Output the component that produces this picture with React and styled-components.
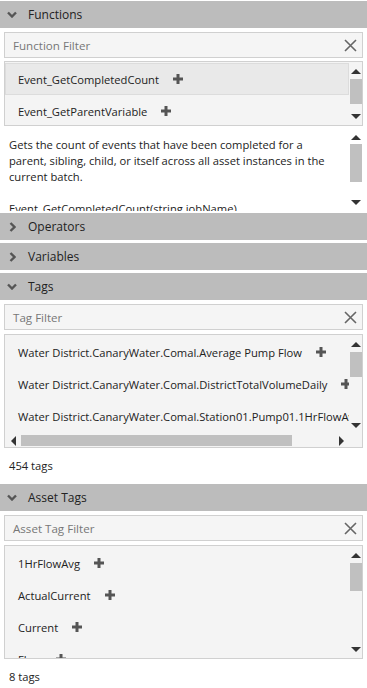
import React from "react";
import styled, { createGlobalStyle } from "styled-components";

const GlobalStyle = createGlobalStyle`
  html, body {
    margin: 0;
    padding: 0;
    background: #ffffff;
  }
  body {
    font-family: "Segoe UI", "Open Sans", "Noto Sans", sans-serif;
    font-size: 11.2px;
    color: #222;
  }
`;

const Panel = styled.div`
  width: 367px;
  height: 688px;
  overflow: hidden;
  display: flex;
  flex-direction: column;
`;

const Header = styled.div`
  height: 27px;
  flex: 0 0 auto;
  margin-top: ${props => props.gap || 0}px;
  background: #bcbcbc;
  display: flex;
  align-items: center;
  font-size: 12px;
  color: #222;
`;

const Chevron = styled.span`
  width: 28px;
  display: flex;
  align-items: center;
  justify-content: center;
  padding-right: 4px;
  box-sizing: border-box;
  color: #555;
`;

const Filter = styled.div`
  margin: ${props => props.top || 4}px 4px 0;
  height: 26px;
  box-sizing: border-box;
  border: 1px solid #d0d0d0;
  background: #f5f5f5;
  display: flex;
  align-items: center;
  padding: 0 5px 0 8px;
  flex: 0 0 auto;
  font-size: 11.6px;
`;

const Placeholder = styled.span`
  flex: 1;
  color: #777;
`;

const List = styled.div`
  margin: ${props => props.top || 4}px 4px 0;
  height: ${props => props.h}px;
  box-sizing: border-box;
  border: 1px solid #d0d0d0;
  background: #f4f4f4;
  display: grid;
  grid-template-columns: 1fr 13px;
  grid-template-rows: ${props => (props.hscroll ? "1fr 13px" : "1fr")};
  overflow: hidden;
  flex: 0 0 auto;
`;

const Rows = styled.div`
  overflow: hidden;
  padding-top: 1px;
  min-width: 0;
`;

const Row = styled.div`
  height: 32px;
  box-sizing: border-box;
  display: flex;
  align-items: center;
  padding-left: 12px;
  white-space: nowrap;
  background: ${props => (props.active ? "#e9e9e9" : "transparent")};
  border: 1px solid ${props => (props.active ? "#dcdcdc" : "transparent")};
`;

const Plus = styled.span`
  margin-left: 14px;
  display: inline-flex;
  flex: 0 0 auto;
`;

const VScroll = styled.div`
  display: flex;
  flex-direction: column;
  align-items: center;
  padding: 6px 0 5px;
  box-sizing: border-box;
`;

const Thumb = styled.div`
  width: 12px;
  height: ${props => props.h}px;
  margin-top: ${props => props.top}px;
  background: #c0c0c0;
`;

const Spacer = styled.div`
  flex: 1;
`;

const HScroll = styled.div`
  display: flex;
  align-items: center;
  padding: 0 4px 0 5px;
  gap: 4px;
`;

const HThumb = styled.div`
  height: 11px;
  width: ${props => props.w}px;
  background: #c0c0c0;
`;

const Description = styled.div`
  margin-top: 2px;
  height: 83px;
  flex: 0 0 auto;
  display: grid;
  grid-template-columns: 1fr 13px;
  overflow: hidden;
  padding-right: 5px;
`;

const DescText = styled.div`
  padding: 9px 0 0 9px;
  line-height: 16px;
  white-space: nowrap;
  overflow: hidden;
`;

const DescLine = styled.div`
  min-height: 16px;
`;

const Count = styled.div`
  padding: 10px 9px 0;
  height: 36px;
  box-sizing: border-box;
  line-height: 16px;
  flex: 0 0 auto;
`;

const Tri = ({ dir }) => {
  const pts = {
    up: "0,6 5,1 10,6",
    down: "0,1 5,6 10,1",
    left: "6,0 1,5 6,10",
    right: "1,0 6,5 1,10",
  }[dir];
  const horiz = dir === "left" || dir === "right";
  return (
    <svg width={horiz ? 7 : 10} height={horiz ? 10 : 7} viewBox={horiz ? "0 0 7 10" : "0 0 10 7"}>
      <polygon points={pts} fill="#333" />
    </svg>
  );
};

const ChevronIcon = ({ open }) =>
  open ? (
    <svg width="10" height="7" viewBox="0 0 10 7">
      <path d="M1 1.5 L5 5.5 L9 1.5" fill="none" stroke="#555" strokeWidth="2.4" />
    </svg>
  ) : (
    <svg width="7" height="10" viewBox="0 0 7 10">
      <path d="M1.5 1 L5.5 5 L1.5 9" fill="none" stroke="#555" strokeWidth="2.4" />
    </svg>
  );

const PlusIcon = () => (
  <svg width="10" height="10" viewBox="0 0 10 10">
    <path d="M5 0 V10 M0 5 H10" stroke="#555" strokeWidth="3" />
  </svg>
);

const ClearIcon = () => (
  <svg width="13" height="13" viewBox="0 0 13 13">
    <path d="M1 1 L12 12 M12 1 L1 12" stroke="#666" strokeWidth="1.6" />
  </svg>
);

const SectionHeader = ({ title, open, gap }) => (
  <Header gap={gap}>
    <Chevron>
      <ChevronIcon open={open} />
    </Chevron>
    {title}
  </Header>
);

const FilterBox = ({ placeholder, top }) => (
  <Filter top={top}>
    <Placeholder>{placeholder}</Placeholder>
    <ClearIcon />
  </Filter>
);

const ScrollBar = ({ thumbTop, thumbH }) => (
  <VScroll>
    <Tri dir="up" />
    <Thumb top={thumbTop} h={thumbH} />
    <Spacer />
    <Tri dir="down" />
  </VScroll>
);

const ItemList = ({ items, h, top, active, hscroll, thumbTop, thumbH }) => (
  <List h={h} top={top} hscroll={hscroll}>
    <Rows>
      {items.map((item, i) => (
        <Row key={item} active={i === active}>
          {item}
          <Plus>
            <PlusIcon />
          </Plus>
        </Row>
      ))}
    </Rows>
    <ScrollBar thumbTop={thumbTop} thumbH={thumbH} />
    {hscroll ? (
      <>
        <HScroll>
          <Tri dir="left" />
          <HThumb w={271} />
          <Spacer />
          <Tri dir="right" />
        </HScroll>
        <div />
      </>
    ) : null}
  </List>
);

const functions = ["Event_GetCompletedCount", "Event_GetParentVariable"];
const tags = [
  "Water District.CanaryWater.Comal.Average Pump Flow",
  "Water District.CanaryWater.Comal.DistrictTotalVolumeDaily",
  "Water District.CanaryWater.Comal.Station01.Pump01.1HrFlowAvg",
];
const assetTags = ["1HrFlowAvg", "ActualCurrent", "Current", "Flow"];

const description = [
  "Gets the count of events that have been completed for a",
  "parent, sibling, child, or itself across all asset instances in the",
  "current batch.",
  "",
  "Event_GetCompletedCount(string jobName)",
];

export default function App() {
  return (
    <>
      <GlobalStyle />
      <Panel>
        <SectionHeader title="Functions" open gap={1} />
        <FilterBox placeholder="Function Filter" top={4} />
        <ItemList items={functions} h={65} top={3} active={0} thumbTop={4} thumbH={25} />
        <Description>
          <DescText>
            {description.map((line, i) => (
              <DescLine key={i}>{line}</DescLine>
            ))}
          </DescText>
          <VScroll>
            <Tri dir="up" />
            <Thumb top={3} h={38} />
            <Spacer />
            <Tri dir="down" />
          </VScroll>
        </Description>
        <SectionHeader title="Operators" gap={2} />
        <SectionHeader title="Variables" gap={3} />
        <SectionHeader title="Tags" open gap={3} />
        <FilterBox placeholder="Tag Filter" top={4} />
        <ItemList items={tags} h={114} top={4} hscroll thumbTop={4} thumbH={25} />
        <Count>454 tags</Count>
        <SectionHeader title="Asset Tags" open gap={0} />
        <FilterBox placeholder="Asset Tag Filter" top={4} />
        <ItemList items={assetTags} h={114} top={4} thumbTop={4} thumbH={28} />
        <Count>8 tags</Count>
      </Panel>
    </>
  );
}
